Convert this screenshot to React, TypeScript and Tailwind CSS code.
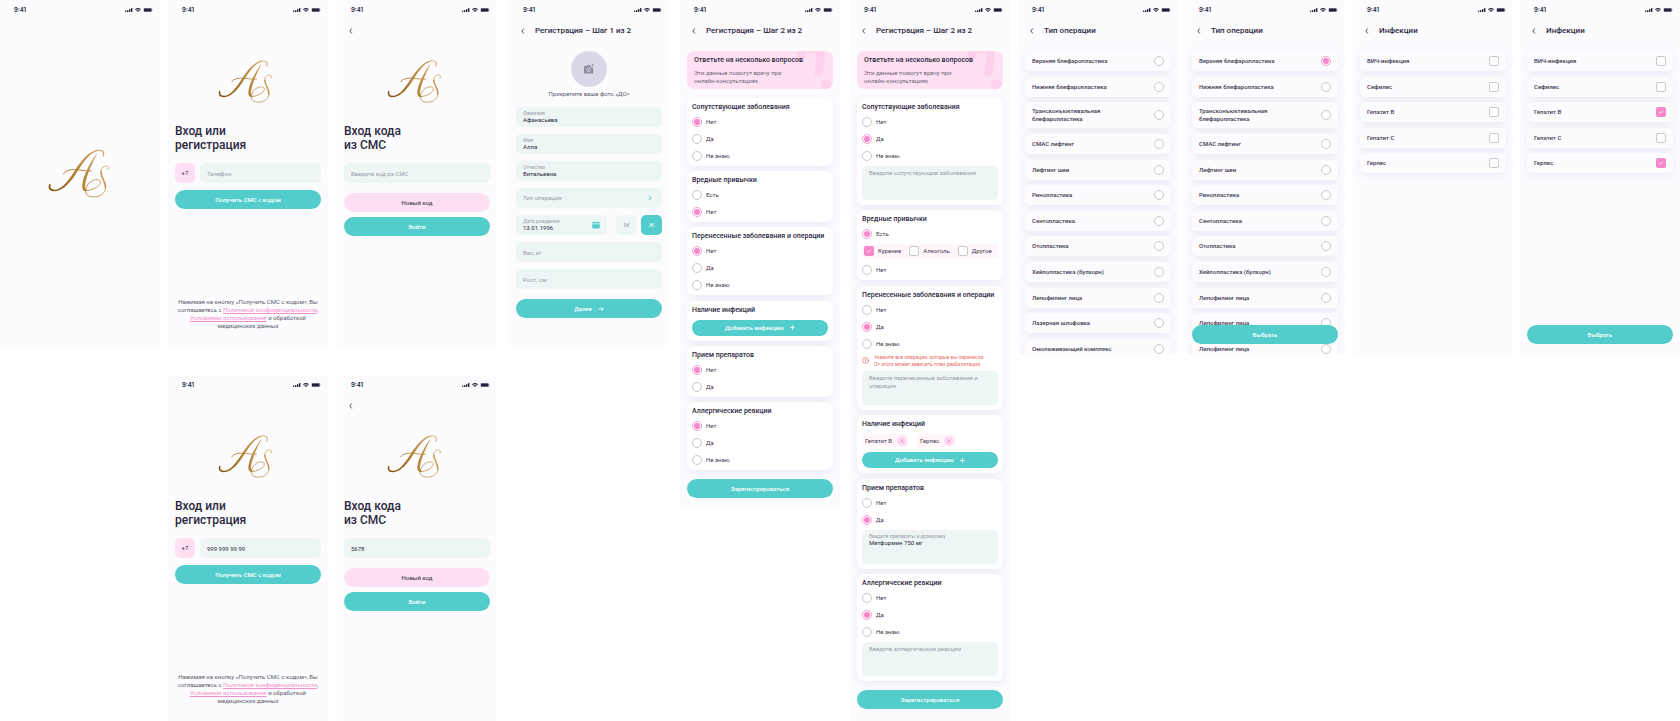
import { useId, type ReactNode } from "react";

function Logo({ className }: { className: string }) {
  const id = useId();
  const gold = `url(#${id})`;
  return (
    <svg viewBox="12 11 188 148" role="img" aria-label="As" className={className} fill="none" strokeLinecap="round" strokeLinejoin="round">
      <defs>
        <linearGradient id={id} gradientUnits="userSpaceOnUse" x1="14" y1="140" x2="198" y2="60">
          <stop offset="0" stopColor="#7f4f06" />
          <stop offset="0.45" stopColor="#b07e33" />
          <stop offset="1" stopColor="#d3a663" />
        </linearGradient>
      </defs>
      <path
        fill={gold}
        d="M15 119 C12 128 15 138 30 139 C52 139 72 122 93 92 C116 57 134 22 164 16 C176 14 182 21 178 31 C177 36 180 35 182 30 C186 18 177 12 163 13 C133 18 112 48 88 84 C68 115 50 134 33 134 C22 134 17 129 20 121 C20 116 16 116 15 119 Z"
      />
      <path
        fill={gold}
        d="M158 27 C142 50 122 85 117 112 C114 128 117 138 126 138 C129 138 132 137 134 135 C127 136 123 130 125 117 C130 90 144 58 160 27 Z"
      />
      <path stroke={gold} strokeWidth="3" d="M59 86 C66 74 84 72 104 74 C120 76 133 78 144 77" />
      <path
        stroke={gold}
        strokeWidth="2.6"
        d="M124 137 C146 137 172 124 171 110 C168 99 146 102 134 117 C119 137 124 156 150 156 C177 156 189 139 187 120 C184 103 171 94 172 78 C174 63 190 59 196 66 C198 71 194 75 191 71"
      />
      <path stroke={gold} strokeWidth="4.6" d="M186 129 C188 112 172 97 173 80" />
    </svg>
  );
}

function StatusBar() {
  return (
    <div className="flex h-5 shrink-0 items-center justify-between pr-[7px] pl-3.5 text-[#231f3d]">
      <span className="font-[Inter] text-[6px] leading-[8px] font-semibold">9:41</span>
      <svg viewBox="0 0 28 6" className="h-[6px] w-[28px]" fill="currentColor" aria-hidden="true">
        <rect x="0" y="3.6" width="1.4" height="1.4" rx="0.4" />
        <rect x="2" y="2.9" width="1.4" height="2.1" rx="0.4" />
        <rect x="4" y="2" width="1.4" height="3" rx="0.4" />
        <rect x="6" y="1" width="1.4" height="4" rx="0.4" />
        <path d="M10 2.2 Q13 -0.4 16 2.2 L15.3 2.9 Q13 1 10.7 2.9 Z" />
        <path d="M11.1 3.3 Q13 1.7 14.9 3.3 L14.2 4 Q13 3 11.8 4 Z" />
        <path d="M12.1 4.3 Q13 3.6 13.9 4.3 L13 5.2 Z" />
        <rect x="18.4" y="0.9" width="8.6" height="4.2" rx="1" opacity="0.35" />
        <rect x="19" y="1.4" width="7.4" height="3.2" rx="0.6" />
        <rect x="27.2" y="2.3" width="0.5" height="1.4" rx="0.2" opacity="0.4" />
      </svg>
    </div>
  );
}

function NavBar({ title }: { title?: string }) {
  return (
    <header className="flex h-[22px] shrink-0 items-center gap-[9px] pl-[11px]">
      <button type="button" aria-label="Назад" className="flex h-[8px] w-[6px] items-center justify-center">
        <svg viewBox="0 0 6 8" className="h-[8px] w-[6px]" fill="none" stroke="#231f3d" strokeWidth="0.8" strokeLinecap="round" strokeLinejoin="round">
          <path d="M3.6 1.8 L1.8 4 L3.6 6.2" />
        </svg>
      </button>
      {title && <h2 className="text-[8px] leading-[10px] font-medium whitespace-nowrap">{title}</h2>}
    </header>
  );
}

function Screen({ className, label, children }: { className: string; label: string; children?: ReactNode }) {
  return (
    <section aria-label={label} className={`relative flex flex-col overflow-hidden bg-[#fcfcff] ${className}`}>
      <StatusBar />
      {children}
    </section>
  );
}

function TealButton({ children, small = false }: { children: ReactNode; small?: boolean }) {
  return (
    <button
      type="button"
      className={`flex w-full shrink-0 items-center justify-center gap-[6px] rounded-full bg-[#52cdcb] text-[6px] leading-[8px] font-medium text-white ${small ? "h-4" : "h-[19px]"}`}
    >
      {children}
    </button>
  );
}

const fieldClass =
  "h-5 w-full min-w-0 rounded-[5px] bg-[#edf6f5] px-[7px] text-[6px] leading-[8px] text-[#2b2840] outline-none placeholder:text-[#9a9ca9]";

function LoginScreen({ phone }: { phone?: string }) {
  return (
    <Screen label="Вход" className="min-h-[346px]">
      <Logo className="mt-[40px] ml-[50px] h-[43px] w-[55px]" />
      <h1 className="mt-[21px] px-[7px] text-[12px] leading-[14px] font-medium">
        Вход или
        <br />
        регистрация
      </h1>
      <form className="mt-[11px] flex flex-col gap-[7px] px-[7px]">
        <div className="flex gap-[5px]">
          <span className="flex size-5 shrink-0 items-center justify-center rounded-[5px] bg-[#ffe0f3] text-[6px] leading-[8px]">+7</span>
          <input type="tel" aria-label="Телефон" placeholder="Телефон" defaultValue={phone} className={fieldClass} />
        </div>
        <TealButton>Получить СМС с кодом</TealButton>
      </form>
      <p className="mt-auto mb-[16px] px-[7px] text-center text-[6px] leading-[8px] text-[#5b5969]">
        Нажимая на кнопку «Получить СМС с кодом», Вы соглашаетесь с{" "}
        <a href="#privacy" className="text-[#f58fce] underline">
          Политикой конфиденциальности
        </a>
        ,{" "}
        <a href="#terms" className="text-[#f58fce] underline">
          Условиями использования
        </a>{" "}
        и обработкой медицинских данных
      </p>
    </Screen>
  );
}

function CodeScreen({ code }: { code?: string }) {
  return (
    <Screen label="Код из СМС" className="min-h-[346px]">
      <NavBar />
      <Logo className="mt-[18px] ml-[50px] h-[43px] w-[55px]" />
      <h1 className="mt-[21px] px-[7px] text-[12px] leading-[14px] font-medium">
        Вход кода
        <br />
        из СМС
      </h1>
      <form className="mt-[11px] flex flex-col gap-[5px] px-[7px]">
        <input type="text" aria-label="Код из СМС" placeholder="Введите код из СМС" defaultValue={code} className={`${fieldClass} mb-[5px]`} />
        <button type="button" className="h-[19px] rounded-full bg-[#ffe0f3] text-[6px] leading-[8px] font-medium text-[#4a475c]">
          Новый код
        </button>
        <TealButton>Войти</TealButton>
      </form>
    </Screen>
  );
}

function LabelledField({ label, value, children }: { label: string; value: string; children?: ReactNode }) {
  const id = useId();
  return (
    <div className="flex h-5 min-w-0 flex-1 shrink-0 items-center rounded-[5px] bg-[#edf6f5] px-[7px]">
      <div className="flex min-w-0 flex-1 flex-col">
        <label htmlFor={id} className="text-[5px] leading-[6px] text-[#9a9ca9]">
          {label}
        </label>
        <input id={id} defaultValue={value} className="h-[8px] w-full min-w-0 text-[6px] leading-[8px] text-[#2b2840] outline-none" />
      </div>
      {children}
    </div>
  );
}

function ProfileScreen() {
  return (
    <Screen label="Регистрация, шаг 1" className="min-h-[346px]">
      <NavBar title="Регистрация – Шаг 1 из 2" />
      <div className="mt-[9px] flex flex-col items-center gap-[3px]">
        <button type="button" aria-label="Добавить фото" className="flex size-9 items-center justify-center rounded-full bg-[#d9d8e6]">
          <svg viewBox="0 0 12 12" className="size-3" aria-hidden="true">
            <path d="M1.6 3 H3.3 L4.2 2 H7 L7.6 3.6 H8.2 V4.4 H10.2 V10 Q10.2 10.6 9.6 10.6 H1.6 Q1 10.6 1 10 V3.6 Q1 3 1.6 3 Z" fill="#8f8ea0" />
            <circle cx="5.6" cy="6.8" r="1.9" fill="none" stroke="#d9d8e6" strokeWidth="0.8" />
            <circle cx="5.6" cy="6.8" r="0.6" fill="#d9d8e6" />
            <path d="M9.7 1 V3.4 M8.5 2.2 H10.9" stroke="#8f8ea0" strokeWidth="0.8" />
          </svg>
        </button>
        <p className="text-[6px] leading-[8px] text-[#5b5969]">Прикрепите ваше фото «ДО»</p>
      </div>
      <form className="mt-[9px] flex flex-col gap-[7px] px-[7px]">
        <div className="flex">
          <LabelledField label="Фамилия" value="Афанасьева" />
        </div>
        <div className="flex">
          <LabelledField label="Имя" value="Алла" />
        </div>
        <div className="flex">
          <LabelledField label="Отчество" value="Витальевна" />
        </div>
        <button type="button" className="flex h-5 items-center justify-between rounded-[5px] bg-[#edf6f5] pr-[9px] pl-[7px] text-[6px] leading-[8px] text-[#9a9ca9]">
          Тип операции
          <svg viewBox="0 0 6 8" className="h-[8px] w-[6px]" fill="none" stroke="#52cdcb" strokeWidth="1" strokeLinecap="round" strokeLinejoin="round" aria-hidden="true">
            <path d="M2 2 L4 4 L2 6" />
          </svg>
        </button>
        <div className="flex gap-[9px]">
          <LabelledField label="Дата рождения" value="13.01.1996">
            <button type="button" aria-label="Открыть календарь" className="size-[8px]">
              <svg viewBox="0 0 8 8" className="size-[8px]" fill="#52cdcb">
                <path d="M1 1 H1.5 V0.4 H2.3 V1 H5.7 V0.4 H6.5 V1 H7 Q7.8 1 7.8 1.8 V2.6 H0.2 V1.8 Q0.2 1 1 1 Z" />
                <path d="M0.2 3.3 H7.8 V6.6 Q7.8 7.6 6.8 7.6 H1.2 Q0.2 7.6 0.2 6.6 Z" />
              </svg>
            </button>
          </LabelledField>
          <div role="group" aria-label="Пол" className="flex gap-1 text-[6px] leading-[8px]">
            <button type="button" aria-pressed="false" className="h-5 w-[21px] rounded-[5px] bg-[#edf6f5] text-[#9a9ca9]">
              М
            </button>
            <button type="button" aria-pressed="true" className="h-5 w-[21px] rounded-[5px] bg-[#52cdcb] text-white">
              Ж
            </button>
          </div>
        </div>
        <input aria-label="Вес, кг" placeholder="Вес, кг" className={fieldClass} />
        <input aria-label="Рост, см" placeholder="Рост, см" className={fieldClass} />
        <div className="mt-[3px]">
          <TealButton>
            Далее
            <svg viewBox="0 0 6 6" className="size-[6px]" fill="none" stroke="currentColor" strokeWidth="0.8" strokeLinecap="round" strokeLinejoin="round" aria-hidden="true">
              <path d="M1 3 H5 M3.4 1.4 L5 3 L3.4 4.6" />
            </svg>
          </TealButton>
        </div>
      </form>
    </Screen>
  );
}

const radioClass =
  "size-[10px] shrink-0 appearance-none rounded-full border border-[#c9c9ce] bg-white checked:border-[#fa9dd5] checked:bg-[#f788cb] checked:bg-clip-content checked:p-px";

function Radio({ name, label, checked }: { name: string; label: string; checked: boolean }) {
  return (
    <label className="flex h-[10px] items-center gap-1 text-[6px] leading-[8px] text-[#3c394e]">
      <input type="radio" name={name} defaultChecked={checked} className={radioClass} />
      {label}
    </label>
  );
}

function CheckBox({ id, checked }: { id: string; checked: boolean }) {
  return (
    <span className="grid shrink-0 place-items-center">
      <input
        id={id}
        type="checkbox"
        defaultChecked={checked}
        className="peer col-start-1 row-start-1 size-[10px] appearance-none rounded-[2px] border border-[#c9c9ce] bg-white checked:border-[#f788cb] checked:bg-[#f788cb]"
      />
      <svg viewBox="0 0 6 6" className="pointer-events-none col-start-1 row-start-1 hidden size-[6px] peer-checked:block" fill="none" stroke="white" strokeWidth="0.8" strokeLinecap="round" strokeLinejoin="round" aria-hidden="true">
        <path d="M1.3 3.2 L2.5 4.4 L4.7 2" />
      </svg>
    </span>
  );
}

function InlineCheck({ label, checked = false }: { label: string; checked?: boolean }) {
  const id = useId();
  return (
    <div className="flex items-center gap-1">
      <CheckBox id={id} checked={checked} />
      <label htmlFor={id} className="text-[6px] leading-[8px] text-[#3c394e]">
        {label}
      </label>
    </div>
  );
}

function Card({ title, children }: { title: string; children: ReactNode }) {
  return (
    <section className="flex flex-col rounded-[7px] bg-white p-[5px] shadow-[0_2px_10px_rgba(84,72,160,0.1)]">
      <h3 className="mb-[6px] text-[7px] leading-[8px] font-medium whitespace-nowrap">{title}</h3>
      {children}
    </section>
  );
}

function Choices({ options, selected }: { options: string[]; selected: string }) {
  const name = useId();
  return (
    <div className="flex flex-col gap-[7px]">
      {options.map((option) => (
        <Radio key={option} name={name} label={option} checked={option === selected} />
      ))}
    </div>
  );
}

const areaClass =
  "block h-[34px] w-full resize-none rounded-[5px] bg-[#edf6f5] px-[7px] py-[3px] text-[6px] leading-[8px] outline-none placeholder:text-[#9a9ca9]";

function Banner() {
  return (
    <div className="relative overflow-hidden rounded-[7px] bg-[#ffe0f3] px-[7px] pt-[5px] pb-1">
      <svg viewBox="0 0 146 38" className="absolute top-0 right-0 h-[38px] w-[146px]" aria-hidden="true">
        <path d="M114 6 C115 0 119 -3 124 -3 C131 -3 134 2 133.6 8 C133.2 13 132 16 131.5 21" fill="none" stroke="#fdd0eb" strokeWidth="8.4" strokeLinecap="round" />
        <ellipse cx="139" cy="33.5" rx="5.6" ry="4.8" fill="#fdd0eb" />
      </svg>
      <h3 className="relative text-[7px] leading-[8px] font-medium whitespace-nowrap">Ответьте на несколько вопросов</h3>
      <p className="relative mt-[5px] text-[6px] leading-[8px] text-[#6a6678]">
        Эти данные помогут врачу при
        <br />
        онлайн-консультациях
      </p>
    </div>
  );
}

function AddInfection() {
  return (
    <TealButton small>
      Добавить инфекцию
      <svg viewBox="0 0 5 5" className="size-[5px]" stroke="currentColor" strokeWidth="0.8" strokeLinecap="round" aria-hidden="true">
        <path d="M2.5 0.6 V4.4 M0.6 2.5 H4.4" />
      </svg>
    </TealButton>
  );
}

function Chip({ label }: { label: string }) {
  return (
    <span className="flex h-[13px] items-center gap-[5px] rounded-[2px] bg-[#fff5fb] pr-px pl-[3px] text-[6px] leading-[8px] text-[#3c394e]">
      {label}
      <button type="button" aria-label={`Убрать: ${label}`} className="flex size-[10px] items-center justify-center rounded-full bg-[#ffdcf1]">
        <svg viewBox="0 0 6 6" className="size-[6px]" stroke="#f788cb" strokeWidth="0.7" strokeLinecap="round">
          <path d="M1 1 L5 5 M5 1 L1 5" />
        </svg>
      </button>
    </span>
  );
}

const three = ["Нет", "Да", "Не знаю"];

function SurveyScreen() {
  return (
    <Screen label="Регистрация, шаг 2" className="min-h-[506px]">
      <NavBar title="Регистрация – Шаг 2 из 2" />
      <form className="mt-[9px] flex flex-col gap-[9px] px-[7px]">
        <Banner />
        <div className="flex min-h-[372px] flex-col justify-between">
          <Card title="Сопутствующие заболевания">
            <Choices options={three} selected="Нет" />
          </Card>
          <Card title="Вредные привычки">
            <Choices options={["Есть", "Нет"]} selected="Нет" />
          </Card>
          <Card title="Перенесенные заболевания и операции">
            <Choices options={three} selected="Нет" />
          </Card>
          <Card title="Наличие инфекций">
            <AddInfection />
          </Card>
          <Card title="Прием препаратов">
            <Choices options={["Нет", "Да"]} selected="Нет" />
          </Card>
          <Card title="Аллергические реакции">
            <Choices options={three} selected="Нет" />
          </Card>
        </div>
        <TealButton>Зарегистрироваться</TealButton>
      </form>
    </Screen>
  );
}

function FilledSurveyScreen() {
  const habits = useId();
  const drugs = useId();
  return (
    <Screen label="Регистрация, шаг 2, ответы" className="min-h-[721px]">
      <NavBar title="Регистрация – Шаг 2 из 2" />
      <form className="mt-[9px] flex flex-col gap-[9px] px-[7px]">
        <Banner />
        <div className="flex min-h-[583px] flex-col justify-between">
          <Card title="Сопутствующие заболевания">
            <Choices options={three} selected="Да" />
            <textarea aria-label="Сопутствующие заболевания" placeholder="Введите сопутствующие заболевания" className={`${areaClass} mt-[5px]`} />
          </Card>
          <Card title="Вредные привычки">
            <Radio name={habits} label="Есть" checked />
            <div className="mt-[5px] mb-[7px] flex h-3.5 items-center gap-2 rounded-[2px] bg-[#fff5fb] pl-[2px]">
              <InlineCheck label="Курение" checked />
              <InlineCheck label="Алкоголь" />
              <InlineCheck label="Другое" />
            </div>
            <Radio name={habits} label="Нет" checked={false} />
          </Card>
          <Card title="Перенесенные заболевания и операции">
            <Choices options={three} selected="Да" />
            <div className="mt-[5px] mb-[3px] flex items-center gap-[5px] text-[5px] leading-[7px] whitespace-nowrap text-[#ea6a5e]">
              <svg viewBox="0 0 7 7" className="size-[7px] shrink-0" fill="none" stroke="currentColor" strokeWidth="0.7" strokeLinecap="round" aria-hidden="true">
                <circle cx="3.5" cy="3.5" r="2.9" />
                <path d="M3.5 2 V3.7 M3.5 4.9 V5" />
              </svg>
              <p role="alert">
                Укажите все операции, которые вы перенесли.
                <br />
                От этого может зависеть план реабилитации.
              </p>
            </div>
            <textarea aria-label="Перенесенные заболевания и операции" placeholder="Введите перенесенные заболевания и операции" className={areaClass} />
          </Card>
          <Card title="Наличие инфекций">
            <div className="mb-[5px] flex gap-[9px]">
              <Chip label="Гепатит B" />
              <Chip label="Герпес" />
            </div>
            <AddInfection />
          </Card>
          <Card title="Прием препаратов">
            <Choices options={["Нет", "Да"]} selected="Да" />
            <div className="mt-[5px] flex h-[34px] flex-col rounded-[5px] bg-[#edf6f5] px-[7px] py-[3px]">
              <label htmlFor={drugs} className="text-[5px] leading-[6px] text-[#9a9ca9]">
                Введите препараты и дозировку
              </label>
              <textarea id={drugs} defaultValue="Метформин 750 мг" className="min-h-0 w-full flex-1 resize-none text-[6px] leading-[8px] outline-none" />
            </div>
          </Card>
          <Card title="Аллергические реакции">
            <Choices options={three} selected="Да" />
            <textarea aria-label="Аллергические реакции" placeholder="Введите аллергические реакции" className={`${areaClass} mt-[5px]`} />
          </Card>
        </div>
        <TealButton>Зарегистрироваться</TealButton>
      </form>
    </Screen>
  );
}

const rowClass =
  "flex min-h-5 items-center justify-between gap-2 rounded-[5px] bg-[#fcfcff] px-[7px] py-[5px] text-[6px] leading-[8px] font-medium text-[#3c394e] shadow-[0_2px_9px_rgba(84,72,160,0.11)]";

const operations = [
  "Верхняя блефаропластика",
  "Нижняя блефаропластика",
  "Трансконъюктивальная блефаропластика",
  "СМАС лифтинг",
  "Лифтинг шеи",
  "Ринопластика",
  "Сентопластика",
  "Отопластика",
  "Хейлопластика (булхорн)",
  "Липофилинг лица",
];

function OperationScreen({ tail, selected, children }: { tail: string[]; selected?: number; children?: ReactNode }) {
  const name = useId();
  return (
    <Screen label="Тип операции" className="h-[354px]">
      <NavBar title="Тип операции" />
      <div className="mt-[9px] flex h-[308px] shrink-0 flex-col justify-between px-[7px]">
        {[...operations, ...tail].map((item, index) => (
          <label key={index} className={rowClass}>
            <span className="max-w-[84px]">{item}</span>
            <input type="radio" name={name} defaultChecked={index === selected} className={radioClass} />
          </label>
        ))}
      </div>
      {children}
    </Screen>
  );
}

function InfectionRow({ label, checked }: { label: string; checked: boolean }) {
  const id = useId();
  return (
    <div className={rowClass}>
      <label htmlFor={id}>{label}</label>
      <CheckBox id={id} checked={checked} />
    </div>
  );
}

function InfectionScreen({ selected, children }: { selected: string[]; children?: ReactNode }) {
  return (
    <Screen label="Инфекции" className="min-h-[354px]">
      <NavBar title="Инфекции" />
      <div className="mt-[9px] flex min-h-[122px] flex-col justify-between px-[7px]">
        {["ВИЧ-инфекция", "Сифилис", "Гепатит B", "Гепатит C", "Герпес"].map((item) => (
          <InfectionRow key={item} label={item} checked={selected.includes(item)} />
        ))}
      </div>
      {children}
    </Screen>
  );
}

export default function App() {
  return (
    <main className="flex items-start bg-white font-[Roboto,sans-serif] text-[#2b2840]">
      <div className="min-w-0 flex-1">
        <Screen label="Заставка" className="min-h-[346px]">
          <Logo className="mt-[129px] ml-[48px] h-[49px] w-[62px]" />
        </Screen>
      </div>
      <div className="ml-[8px] flex min-w-0 flex-1 flex-col gap-[29px]">
        <LoginScreen />
        <LoginScreen phone="999 999 99 99" />
      </div>
      <div className="ml-[9px] flex min-w-0 flex-1 flex-col gap-[29px]">
        <CodeScreen />
        <CodeScreen code="5678" />
      </div>
      <div className="ml-[12px] min-w-0 flex-1">
        <ProfileScreen />
      </div>
      <div className="ml-[11px] min-w-0 flex-1">
        <SurveyScreen />
      </div>
      <div className="ml-[10px] min-w-0 flex-1">
        <FilledSurveyScreen />
      </div>
      <div className="ml-[8px] min-w-0 flex-1">
        <OperationScreen tail={["Лазерная шлофовка", "Омолаживающий комплекс"]} />
      </div>
      <div className="ml-[7px] min-w-0 flex-1">
        <OperationScreen tail={["Липофилинг лица", "Липофилинг лица"]} selected={0}>
          <div className="absolute inset-x-[7px] bottom-[10px]">
            <TealButton>Выбрать</TealButton>
          </div>
        </OperationScreen>
      </div>
      <div className="ml-[8px] min-w-0 flex-1">
        <InfectionScreen selected={[]} />
      </div>
      <div className="ml-[7px] min-w-0 flex-1">
        <InfectionScreen selected={["Гепатит B", "Герпес"]}>
          <div className="mt-auto px-[7px] pb-[10px]">
            <TealButton>Выбрать</TealButton>
          </div>
        </InfectionScreen>
      </div>
    </main>
  );
}
